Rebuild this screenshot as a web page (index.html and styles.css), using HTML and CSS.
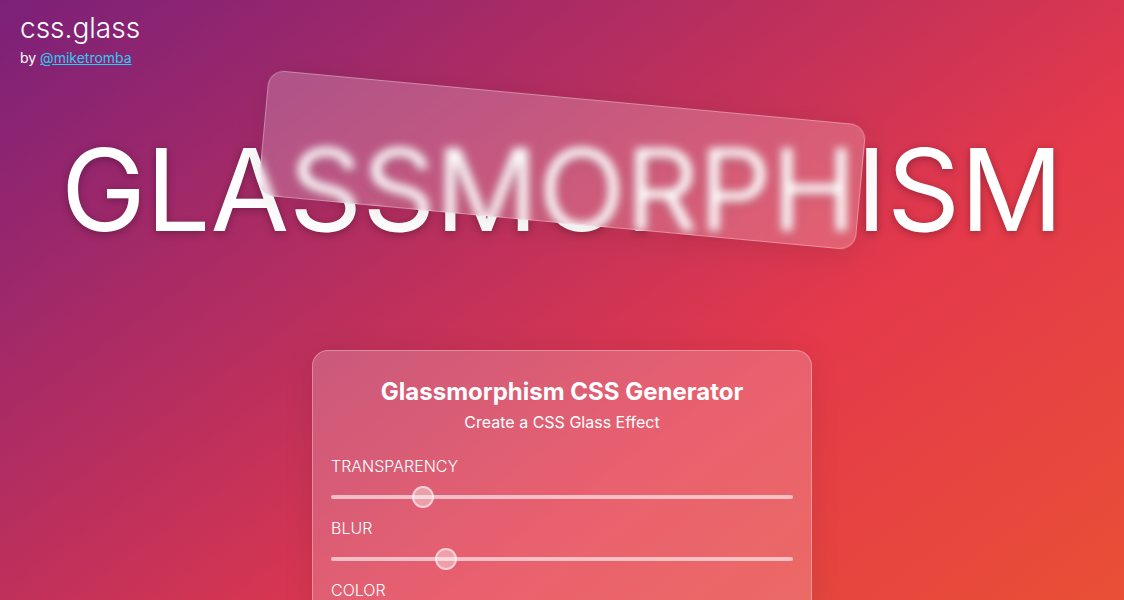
FILE: index.html
```html
<!DOCTYPE html>
<html lang="en">
<head>
<meta charset="utf-8">
<meta name="viewport" content="width=device-width, initial-scale=1">
<title>css.glass</title>
<link rel="stylesheet" href="styles.css">
</head>
<body>
<header class="site-header">
  <div class="logo">css.glass</div>
  <div class="byline">by <a href="#author">@miketromba</a></div>
</header>
<main>
  <section class="hero">
    <h1 class="hero-title">GLASSMORPHISM</h1>
    <div class="hero-glass"></div>
  </section>
  <form class="panel">
    <h2 class="panel-title">Glassmorphism CSS Generator</h2>
    <p class="panel-subtitle">Create a CSS Glass Effect</p>
    <div class="field">
      <label for="transparency">TRANSPARENCY</label>
      <input class="slider" id="transparency" type="range" min="0" max="1" step="0.001" value="0.184">
    </div>
    <div class="field">
      <label for="blur">BLUR</label>
      <input class="slider" id="blur" type="range" min="0" max="20" step="0.01" value="4.73">
    </div>
    <div class="field">
      <label for="color">COLOR</label>
      <input class="color" id="color" type="color" value="#ffffff">
    </div>
  </form>
</main>
</body>
</html>
```
FILE: styles.css
```css
* { box-sizing: border-box; }

html { scrollbar-width: none; }

body {
  margin: 0;
  min-height: 100vh;
  color: #fff;
  font-family: Inter, sans-serif;
  font-optical-sizing: none;
  font-size: 16px;
  background: linear-gradient(144deg, #7b2079, #e4394b 65%, #e94f35) fixed;
}

.site-header {
  padding: 12px 20px 0;
}

.logo {
  font-size: 28px;
  font-weight: 300;
  line-height: 32px;
}

.byline {
  margin-top: 2px;
  font-size: 14px;
  line-height: 24px;
}

.byline a { color: #2acdf5; }

.hero {
  position: relative;
  display: flex;
  justify-content: center;
  height: 280px;
}

.hero-title {
  margin: 50px 0 0;
  font-size: 114px;
  font-weight: 400;
  line-height: 140px;
  text-shadow: 0 2px 8px rgba(0, 0, 0, 0.3);
}

.hero-glass {
  position: absolute;
  top: 27px;
  left: 50%;
  width: 600px;
  height: 126px;
  border: 1px solid rgba(255, 255, 255, 0.3);
  border-radius: 16px;
  background: rgba(255, 255, 255, 0.2);
  box-shadow: 0 4px 30px rgba(0, 0, 0, 0.1);
  backdrop-filter: blur(5px);
  transform: translateX(-50%) rotate(5.3deg);
}

.panel {
  width: 500px;
  max-width: 100%;
  margin: 0 auto;
  padding: 24px 18px;
  border: 1px solid rgba(255, 255, 255, 0.3);
  border-radius: 16px;
  background: rgba(255, 255, 255, 0.2);
  box-shadow: 0 4px 30px rgba(0, 0, 0, 0.1);
}

.panel-title {
  margin: 0;
  font-size: 24px;
  font-weight: 700;
  line-height: 34px;
  text-align: center;
}

.panel-subtitle {
  margin: 0 0 19px;
  line-height: 26px;
  text-align: center;
}

.field {
  display: flex;
  flex-direction: column;
  height: 62px;
}

.field label {
  font-weight: 300;
  line-height: 24px;
}

.slider {
  appearance: none;
  width: 100%;
  height: 22px;
  margin: 8px 0 0;
  background: none;
}

.slider::-webkit-slider-runnable-track {
  height: 4px;
  border-radius: 2px;
  background: rgba(255, 255, 255, 0.6);
}

.slider::-webkit-slider-thumb {
  appearance: none;
  width: 22px;
  height: 22px;
  margin-top: -9px;
  border: 2px solid rgba(255, 255, 255, 0.5);
  border-radius: 50%;
  background: rgba(255, 255, 255, 0.4);
}
```
